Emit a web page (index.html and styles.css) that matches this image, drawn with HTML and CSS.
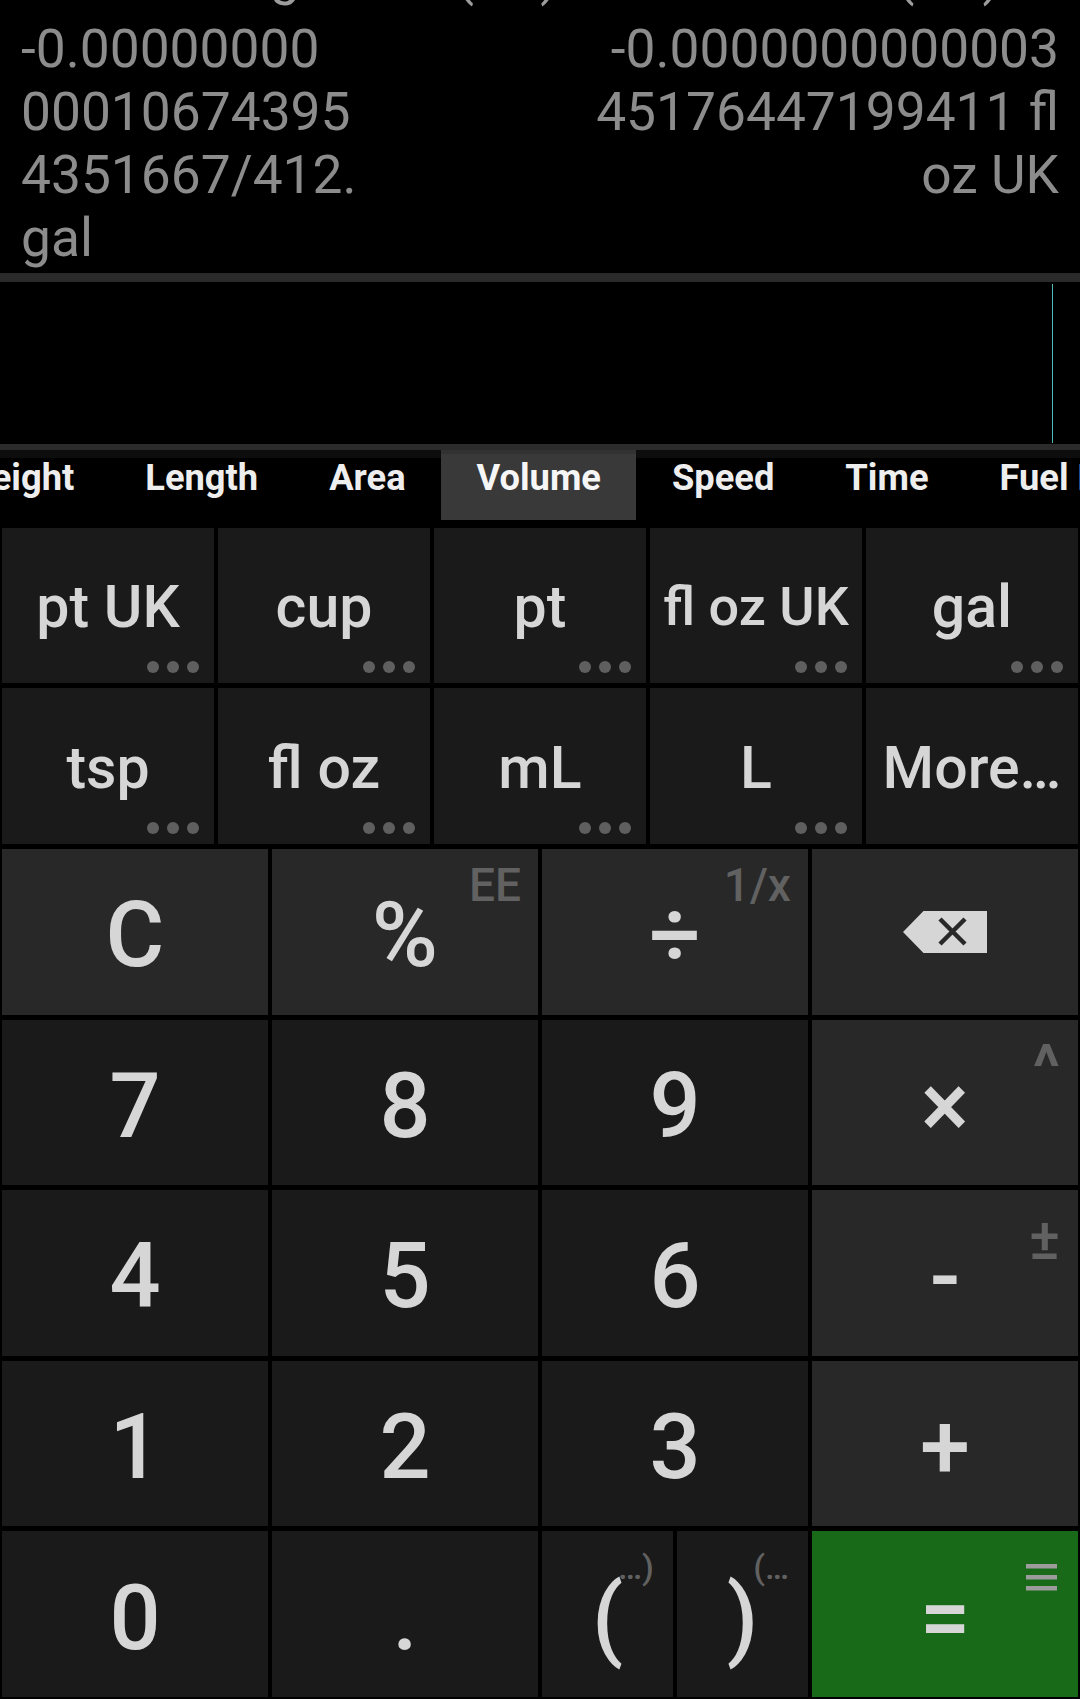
FILE: index.html
```html
<!DOCTYPE html>
<html lang="en">
<head>
<meta charset="utf-8">
<title>Unit converter – Volume</title>
<link rel="stylesheet" href="styles.css">
</head>
<body>
<div class="app">
  <section class="display">
    <div class="col col-from">
      <div class="caption">Volume in gallons (US)</div>
      <div class="val">-0.00000000</div>
      <div class="val">00010674395</div>
      <div class="val">4351667/412.</div>
      <div class="val">gal</div>
    </div>
    <div class="col col-to">
      <div class="caption">fl oz (UK)</div>
      <div class="val">-0.0000000000003</div>
      <div class="val">45176447199411 fl</div>
      <div class="val">oz UK</div>
    </div>
  </section>
  <div class="divider-a"></div>
  <section class="input"><span class="cursor"></span></section>
  <div class="divider-b"></div>
  <nav class="tabs">
    <div class="tab-track">
      <div class="tab">Weight</div>
      <div class="tab">Length</div>
      <div class="tab">Area</div>
      <div class="tab active">Volume</div>
      <div class="tab">Speed</div>
      <div class="tab">Time</div>
      <div class="tab">Fuel Economy</div>
    </div>
  </nav>
  <section class="pad">
    <div class="units">
      <div class="unit">pt UK<span class="dots"><i></i><i></i><i></i></span></div>
      <div class="unit">cup<span class="dots"><i></i><i></i><i></i></span></div>
      <div class="unit">pt<span class="dots"><i></i><i></i><i></i></span></div>
      <div class="unit fit">fl oz UK<span class="dots"><i></i><i></i><i></i></span></div>
      <div class="unit">gal<span class="dots"><i></i><i></i><i></i></span></div>
      <div class="unit">tsp<span class="dots"><i></i><i></i><i></i></span></div>
      <div class="unit">fl oz<span class="dots"><i></i><i></i><i></i></span></div>
      <div class="unit">mL<span class="dots"><i></i><i></i><i></i></span></div>
      <div class="unit">L<span class="dots"><i></i><i></i><i></i></span></div>
      <div class="unit">More…</div>
    </div>
    <div class="keys">
      <div class="key op">C</div>
      <div class="key op">%<span class="alt">EE</span></div>
      <div class="key op">÷<span class="alt">1/x</span></div>
      <div class="key op">
        <svg class="bksp" width="84" height="42" viewBox="0 0 84 42" aria-label="Backspace">
          <path d="M20.5 0H84V42H20.5L0 21Z" fill="#d6d6d6"/>
          <path d="M37 8L62 33M62 8L37 33" stroke="#282828" stroke-width="4.5" fill="none"/>
        </svg>
      </div>

      <div class="key">7</div>
      <div class="key">8</div>
      <div class="key">9</div>
      <div class="key op">×<span class="alt caret">^</span></div>

      <div class="key">4</div>
      <div class="key">5</div>
      <div class="key">6</div>
      <div class="key op">-<span class="alt pm">±</span></div>

      <div class="key">1</div>
      <div class="key">2</div>
      <div class="key">3</div>
      <div class="key op">+</div>

      <div class="key">0</div>
      <div class="key">.</div>
      <div class="parens">
        <div class="key"><span class="alt small">…)</span><span class="main">(</span></div>
        <div class="key"><span class="alt small">(…</span><span class="main">)</span></div>
      </div>
      <div class="key eq">=
        <svg class="menu" width="31" height="27" viewBox="0 0 31 27" aria-label="History">
          <rect x="0" y="0" width="31" height="4.5" fill="#9c9c9c"/>
          <rect x="0" y="11" width="31" height="4.5" fill="#9c9c9c"/>
          <rect x="0" y="22" width="31" height="4.5" fill="#9c9c9c"/>
        </svg>
      </div>
    </div>
  </section>
</div>
</body>
</html>
```
FILE: styles.css
```css
html, body {
  margin: 0;
  padding: 0;
  background: #000;
}

body {
  font-family: Roboto, "Noto Sans", "Liberation Sans", sans-serif;
}

.app {
  width: 1080px;
  height: 1699px;
  display: flex;
  flex-direction: column;
  overflow: hidden;
  background: #000;
}

/* ---------- result display ---------- */
.display {
  height: 273px;
  flex-shrink: 0;
  overflow: hidden;
  display: flex;
  justify-content: space-between;
  padding: 0 21px 0 21px;
  box-sizing: border-box;
  font-size: 53.3px;
  line-height: 63px;
  color: #8c8c8c;
}

.col {
  display: flex;
  flex-direction: column;
  white-space: nowrap;
}

.col-to {
  align-items: flex-end;
}

.caption {
  margin-top: -55px;
  margin-bottom: 10px;
  color: #9c9c9c;
}

.col-to .caption {
  padding-right: 58px;
}

.divider-a {
  height: 9px;
  flex-shrink: 0;
  background: #2a2a2a;
}

.divider-b {
  height: 6px;
  flex-shrink: 0;
  background: #2b2b2b;
}

/* ---------- input line ---------- */
.input {
  height: 162px;
  flex-shrink: 0;
  display: flex;
  justify-content: flex-end;
  padding: 2px 27px 1px 0;
  box-sizing: border-box;
}

.cursor {
  width: 1px;
  background: #4fbcbc;
}

/* ---------- category tabs ---------- */
.tabs {
  height: 78px;
  flex-shrink: 0;
  overflow: hidden;
  background: linear-gradient(#0d0d0d 0, #0d0d0d 8px, #000 8px);
}

.tab-track {
  display: flex;
  margin-left: -75px;
}

.tab {
  flex-shrink: 0;
  height: 70px;
  box-sizing: border-box;
  padding: 6px 35.5px 0;
  font-size: 36.3px;
  font-weight: 700;
  color: #eeeeee;
  white-space: nowrap;
}

.tab.active {
  background: #393939;
  border-top: 4px solid #323232;
  padding-top: 2px;
  color: #f6f6f6;
}

/* ---------- keypad ---------- */
.pad {
  flex: 1;
  display: flex;
  flex-direction: column;
  gap: 5px;
  padding: 0 2px 2px;
}

.units {
  display: grid;
  grid-template-columns: repeat(5, 1fr);
  grid-template-rows: 155px 156px;
  gap: 5px 4px;
}

.unit {
  position: relative;
  background: #1a1a1a;
  display: flex;
  align-items: center;
  justify-content: center;
  font-size: 59px;
  font-weight: 500;
  color: #d6d6d6;
  padding-top: 2px;
  box-sizing: border-box;
  white-space: nowrap;
}

.unit.fit {
  font-size: 54px;
}

.dots {
  position: absolute;
  right: 15px;
  bottom: 10px;
  display: flex;
  gap: 8px;
}

.dots i {
  display: block;
  width: 12px;
  height: 12px;
  border-radius: 50%;
  background: #5f5f5f;
}

.keys {
  flex: 1;
  display: grid;
  grid-template-columns: repeat(4, 1fr);
  grid-template-rows: repeat(5, 1fr);
  gap: 5px 4px;
}

.key {
  position: relative;
  background: #1a1a1a;
  display: flex;
  align-items: center;
  justify-content: center;
  font-size: 90px;
  font-weight: 500;
  color: #d6d6d6;
  padding-top: 8px;
  box-sizing: border-box;
}

.key.op {
  background: #282828;
}

.key.eq {
  background: #196a18;
}

.bksp {
  margin-top: -8px;
}

.alt {
  position: absolute;
  top: 9px;
  right: 17px;
  font-size: 46px;
  font-weight: 500;
  line-height: normal;
  color: #616161;
}

.alt.caret {
  font-size: 62px;
  font-weight: 700;
  top: 10px;
  right: 18px;
}

.alt.pm {
  font-size: 58px;
  top: 15px;
  right: 18px;
}

.alt.small {
  font-size: 34px;
  top: 16px;
  right: 19px;
}

.parens {
  display: flex;
  gap: 4px;
}

.parens .key {
  flex: 1;
}

.main {
  position: relative;
  z-index: 1;
}

.menu {
  position: absolute;
  top: 33px;
  right: 21px;
}
```
